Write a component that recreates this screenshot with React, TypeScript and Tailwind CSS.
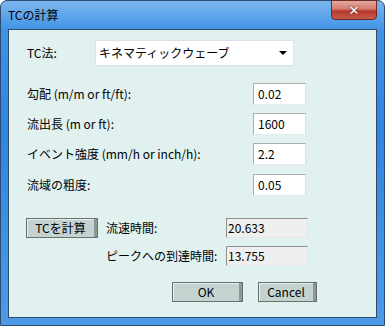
import React from "react";

const jp = { fontFamily: '"Noto Sans CJK JP", "DejaVu Sans", sans-serif' };

function TextBox({ value, readOnly }: { value: string; readOnly?: boolean }) {
  return (
    <div
      className={
        readOnly
          ? "w-[82px] h-[20px] bg-[#efefef] border border-[#8f8f8f] border-r-[#e6e6e6] border-b-[#e6e6e6] flex items-center pl-[1px] text-[12px] leading-none"
          : "w-[53px] h-[22px] bg-white border border-[#abadb3] border-r-[#dbdfe6] border-b-[#e3e9ef] flex items-center pl-[4px] text-[12px] leading-none"
      }
    >
      {value}
    </div>
  );
}

function Btn({ label, w }: { label: string; w: string }) {
  return (
    <button
      className={`${w} h-[20px] bg-[#c4d3d0] border border-[#68716f] shadow-[inset_-3px_0_0_#8b9896,inset_1px_1px_0_#e7efee] text-[12px] leading-none flex items-center justify-center pr-[3px]`}
    >
      {label}
    </button>
  );
}

function Row({ label, value }: { label: string; value: string }) {
  return (
    <div className="flex items-center h-[22px]">
      <span className="flex-1 text-[12px]">{label}</span>
      <TextBox value={value} />
    </div>
  );
}

export default function App() {
  return (
    <div
      style={jp}
      className="w-[385px] h-[326px] rounded-t-[7px] border border-[#2a4c72] bg-[linear-gradient(180deg,#7cb6ee_0%,#3f93e6_9%,#2f86e0_40%,#4c9be6_100%)] flex flex-col text-black"
    >
      <div className="h-[28px] flex items-start relative">
        <span className="pl-[7px] pt-[5px] text-[12px] text-black">TCの計算</span>
        <div className="absolute right-[7px] top-[-1px] w-[46px] h-[20px] rounded-b-[4px] border border-[#6b2a27] bg-[linear-gradient(180deg,#e5a89f_0%,#d47a6e_45%,#b6392c_55%,#c85a4a_100%)] flex items-center justify-center">
          <span className="text-white font-bold text-[13px] leading-none [text-shadow:0_0_2px_#3b1a18] font-['DejaVu_Sans']">
            ✕
          </span>
        </div>
      </div>
      <div className="mx-[7px] h-[289px] border border-[#2f4966] bg-[#e1f1f0] pl-[18px] pt-[10px]">
        <div className="flex items-center h-[26px]">
          <span className="w-[68px] text-[12px]">TC法:</span>
          <div className="w-[199px] h-[26px] bg-white border border-[#d9e2e6] flex items-center pl-[3px] text-[12px]">
            <span className="flex-1">キネマティックウェーブ</span>
            <span className="mr-[6px] w-0 h-0 border-l-[4px] border-r-[4px] border-t-[4px] border-l-transparent border-r-transparent border-t-black" />
          </div>
        </div>
        <div className="w-[279px] mt-[17px] flex flex-col gap-[8px]">
          <Row label="勾配 (m/m or ft/ft):" value="0.02" />
          <Row label="流出長 (m or ft):" value="1600" />
          <Row label="イベント強度 (mm/h or inch/h):" value="2.2" />
          <div className="mt-[1px]">
            <Row label="流域の粗度:" value="0.05" />
          </div>
        </div>
        <div className="mt-[22px] flex flex-col gap-[8px] -ml-[1px]">
          <div className="flex items-center">
            <Btn label="TCを計算" w="w-[72px]" />
            <span className="ml-[8px] w-[120px] text-[12px]">流速時間:</span>
            <TextBox value="20.633" readOnly />
          </div>
          <div className="flex items-center">
            <span className="ml-[80px] w-[120px] text-[12px]">ピークへの到達時間:</span>
            <TextBox value="13.755" readOnly />
          </div>
        </div>
        <div className="mt-[16px] flex ml-[145px] gap-[15px]">
          <Btn label="OK" w="w-[71px]" />
          <Btn label="Cancel" w="w-[59px]" />
        </div>
      </div>
    </div>
  );
}
